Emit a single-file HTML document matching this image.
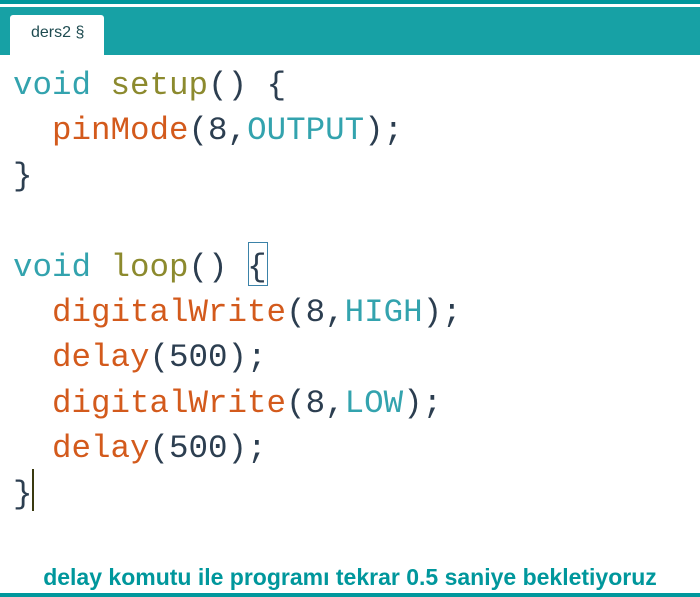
<!DOCTYPE html>
<html><head><meta charset="utf-8"><style>
body{margin:0;width:700px;height:597px;background:#fff;position:relative;overflow:hidden;font-family:"Liberation Mono",monospace}
.l{position:absolute;left:13px;font-size:32.5px;line-height:45px;white-space:pre;color:#434f54}
.k{color:#33a3ae}.f{color:#8c8a2e}.o{color:#d35a1c}.p{color:#2c3e50}
</style></head><body>
<div style="position:absolute;left:0;top:0;width:700px;height:4px;background:#00979c"></div>
<div style="position:absolute;left:0;top:7px;width:700px;height:48px;background:#17a1a5"></div>
<div style="position:absolute;left:10px;top:15px;width:94px;height:40px;background:#fff;border-radius:3px 3px 0 0"></div>
<div style="position:absolute;left:31px;top:24px;font-family:'Liberation Sans',sans-serif;font-size:16px;color:#1e4b50">ders2 §</div>
<div class="l" style="top:63px"><span class="k">void</span> <span class="f">setup</span><span class="p">()</span> <span class="p">{</span></div>
<div class="l" style="top:108px">  <span class="o">pinMode</span><span class="p">(8,</span><span class="k">OUTPUT</span><span class="p">);</span></div>
<div class="l" style="top:154px"><span class="p">}</span></div>
<div class="l" style="top:245px"><span class="k">void</span> <span class="f">loop</span><span class="p">()</span> <span class="p">{</span></div>
<div class="l" style="top:290px">  <span class="o">digitalWrite</span><span class="p">(8,</span><span class="k">HIGH</span><span class="p">);</span></div>
<div class="l" style="top:335px">  <span class="o">delay</span><span class="p">(500);</span></div>
<div class="l" style="top:381px">  <span class="o">digitalWrite</span><span class="p">(8,</span><span class="k">LOW</span><span class="p">);</span></div>
<div class="l" style="top:426px">  <span class="o">delay</span><span class="p">(500);</span></div>
<div class="l" style="top:472px"><span class="p">}</span></div>
<div style="position:absolute;left:248px;top:242px;width:18px;height:42px;border:1.5px solid #3b82a8"></div>
<div style="position:absolute;left:32px;top:469px;width:2px;height:42px;background:#3a3a10"></div>
<div style="position:absolute;left:0;top:563px;width:700px;text-align:center;font-family:'Liberation Sans',sans-serif;font-weight:bold;font-size:23px;line-height:28px;color:#00979c"><span style="display:inline-block;white-space:nowrap">delay komutu ile programı tekrar 0.5 saniye bekletiyoruz</span></div>
<div style="position:absolute;left:0;top:593px;width:700px;height:4px;background:#00979c"></div>
</body></html>
